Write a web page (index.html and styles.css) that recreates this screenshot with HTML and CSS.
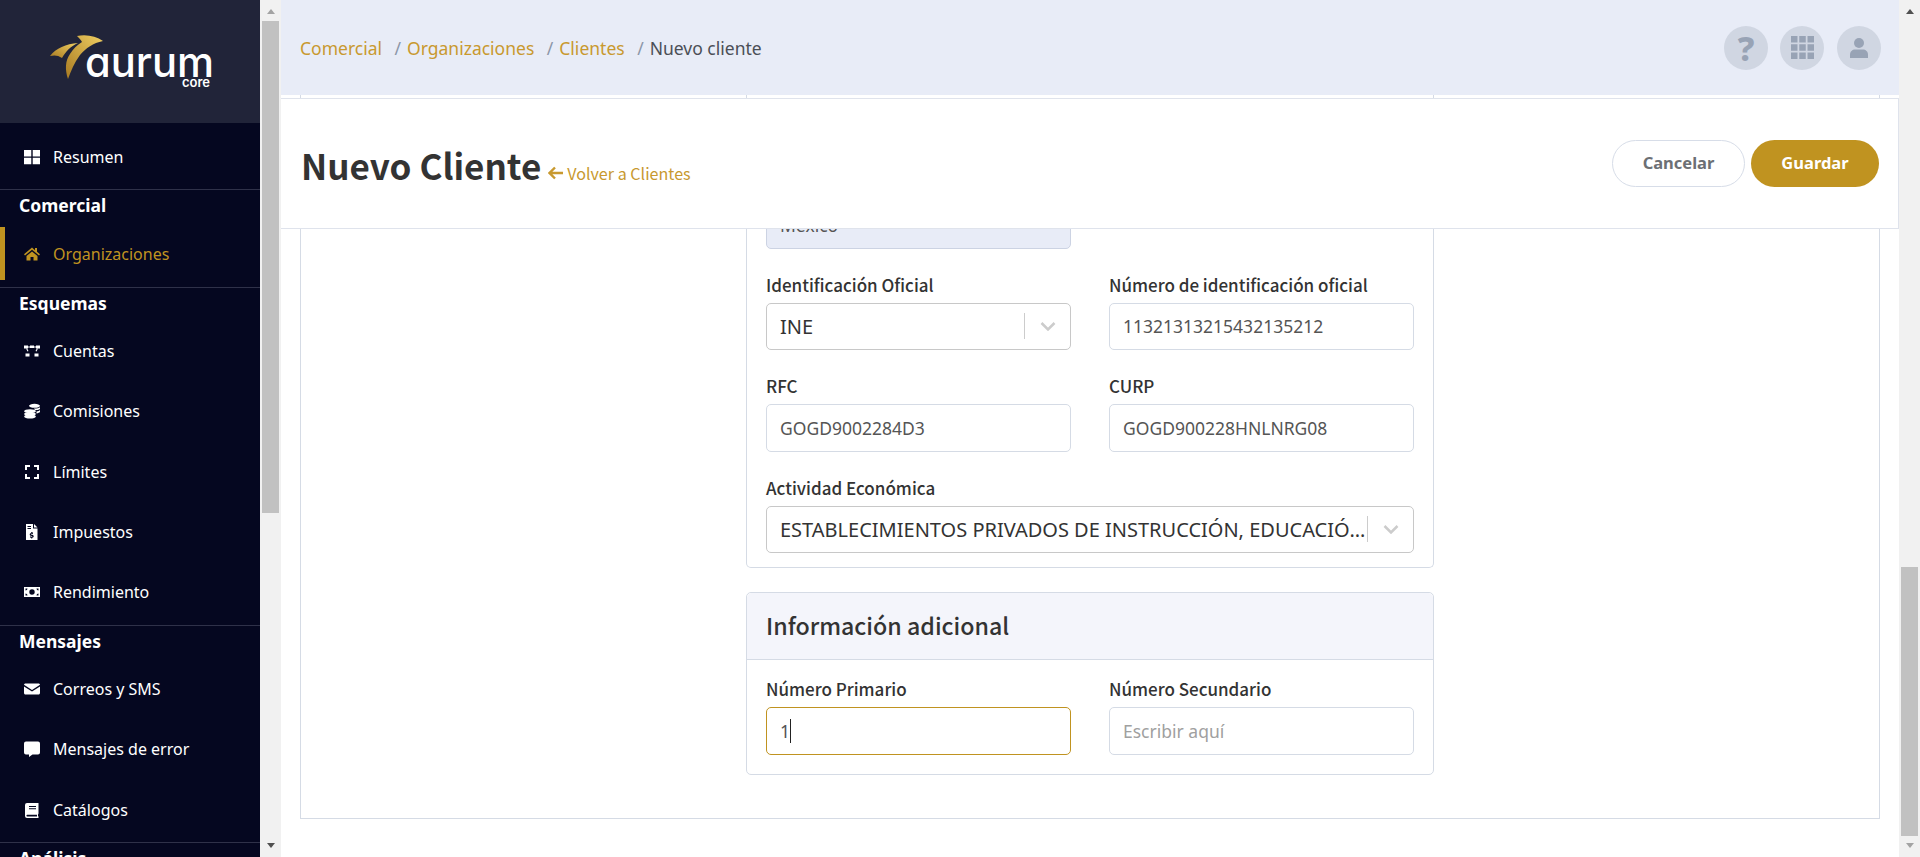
FILE: index.html
```html
<!DOCTYPE html>
<html lang="es">
<head>
<meta charset="utf-8">
<title>Nuevo Cliente</title>
<link rel="stylesheet" href="styles.css">
</head>
<body>
<div class="app">
  <aside class="sidebar">
    <div class="brand">
      <svg class="logo" viewBox="0 0 260 123" width="260" height="123">
        <defs>
          <linearGradient id="gold" x1="0" y1="1" x2="1" y2="0">
            <stop offset="0" stop-color="#a87a22"/>
            <stop offset="1" stop-color="#f0cf62"/>
          </linearGradient>
        </defs>
        <path fill="url(#gold)" d="M77 36C86 34 96 36 103 41C93 43 86 48 80 55C74 63 71 71 68 79C65 70 65 61 70 54C73 49 77 45 82 42C81 40 79 38 77 36Z"/>
        <path fill="url(#gold)" d="M50 56C56 48 66 44 78 43C71 46 66 51 62 58C58 55 54 55 50 56Z"/>
        <text class="logo-word" x="85" y="77">aurum</text>
        <text class="logo-sub" x="182" y="87">core</text>
      </svg>
    </div>
    <nav>
      <div class="group group-first">
        <a class="item"><svg class="ico" viewBox="0 0 16 16"><path d="M0 1h7.300v6.500H0zM8.700 1H16v6.500H8.700zM0 8.800h7.300v6.500H0zM8.700 8.800H16v6.500H8.700z"/></svg>Resumen</a>
      </div>
      <div class="group">
        <h3 class="group-title">Comercial</h3>
        <a class="item active"><svg class="ico" viewBox="0 0 16 16"><path d="M8 1.500 0 8.300l1 1.200L8 3.700l7 5.800 1-1.200-3-2.500V2h-2v2.300zM2.500 10v4.500h4V11h3v3.500h4V10L8 5.400z"/></svg>Organizaciones</a>
      </div>
      <div class="group group-long">
        <h3 class="group-title">Esquemas</h3>
        <a class="item"><svg class="ico" viewBox="0 0 16 16"><path d="M0 2.500h4v3H0zM6 2.500h4V5H6zM12 2.500h4v3h-4zM1.500 10.500h4v3h-4zM10.500 10.500h4v3h-4z"/><path d="M4 3.500h2v1H4zM10 3.500h2v1h-2zM2 5.500h1.200l1.300 2.500-1 .6zM14 5.500h-1.200l-1.300 2.500 1 .6z"/></svg>Cuentas</a>
        <a class="item"><svg class="ico" viewBox="0 0 16 16"><ellipse cx="6" cy="8.200" rx="5.900" ry="2"/><ellipse cx="6" cy="11" rx="5.900" ry="2"/><ellipse cx="6" cy="13.500" rx="5.900" ry="2"/><ellipse cx="10.500" cy="2.800" rx="5.500" ry="2"/><path d="M10 5.500c3 0 5-.5 6-1.300V6c-1 .8-3 1.200-5 1.200zM12.500 8.500c1.500-.2 3-.7 3.500-1.400V9c-.5.600-2 1.200-3.500 1.400z"/></svg>Comisiones</a>
        <a class="item"><svg class="ico" viewBox="0 0 16 16"><path d="M1 1h5v2H3v3H1zM10 1h5v5h-2V3h-3zM1 10h2v3h3v2H1zM13 10h2v5h-5v-2h3z"/></svg>Límites</a>
        <a class="item"><svg class="ico" viewBox="0 0 16 16"><path fill-rule="evenodd" d="M2 0h7v4.500h4.500V16H2zM3.500 2v1H7V2zM3.500 4v1H7V4zM7.200 8v.900c-1 .1-1.500.7-1.500 1.500 0 1.700 2.700 1.100 2.700 2 0 .5-1.300.4-2.300-.1v1.100c.3.200.7.300 1.100.3v.900h1v-.900c1-.2 1.500-.8 1.500-1.500 0-1.700-2.700-1.200-2.700-2 0-.5 1-.4 2-.1V8.600a3 3 0 0 0-.8-.2V8z"/><path d="M10 0l3.500 3.500H10z"/></svg>Impuestos</a>
        <a class="item"><svg class="ico" viewBox="0 0 16 16"><path fill-rule="evenodd" d="M0 3h16v10H0zM1.500 4.500v2a2 2 0 0 0 2-2zM12.500 4.500a2 2 0 0 0 2 2v-2zM8 5.300a2.700 2.700 0 1 0 0 5.400 2.700 2.700 0 0 0 0-5.400zM1.500 9.500v2h2a2 2 0 0 0-2-2zM14.500 9.500a2 2 0 0 0-2 2h2z"/></svg>Rendimiento</a>
      </div>
      <div class="group group-tight">
        <h3 class="group-title">Mensajes</h3>
        <a class="item"><svg class="ico" viewBox="0 0 16 16"><path d="M1.500 2.500h13c.8 0 1.500.6 1.500 1.300L8 9 0 3.800c0-.7.700-1.300 1.500-1.300zM0 5.500l8 5 8-5v6.500c0 .8-.7 1.500-1.500 1.500h-13C.7 13.500 0 12.800 0 12z"/></svg>Correos y SMS</a>
        <a class="item"><svg class="ico" viewBox="0 0 16 16"><path d="M2 .500h12a2 2 0 0 1 2 2v9a2 2 0 0 1-2 2H8.500L5 16v-2.500H2a2 2 0 0 1-2-2v-9a2 2 0 0 1 2-2z"/></svg>Mensajes de error</a>
        <a class="item"><svg class="ico" viewBox="0 0 16 16"><path fill-rule="evenodd" d="M3 1h11.500v10.500c0 .5-.3.800-.5 1v1.500l.5.500V16H3a2 2 0 0 1-2-2V3a2 2 0 0 1 2-2zM5 4v1h7V4zM5 6.300v1h7v-1zM3.200 12.700c-1 0-1 1.800 0 1.800H13v-1.800z"/></svg>Catálogos</a>
      </div>
      <div class="group">
        <h3 class="group-title">Análisis</h3>
      </div>
    </nav>
  </aside>
  <div class="scrollbar">
    <span class="arrow up faint"></span>
    <span class="thumb thumb-side"></span>
    <span class="track"></span>
    <span class="arrow down"></span>
  </div>

  <main class="main">
    <section class="panel">
      <div class="card card-first">
        <div class="hidden-space"></div>
        <div class="grid">
          <div class="field">
            <div class="control disabled">México</div>
          </div>
          <div></div>
          <div class="field">
            <label class="label">Identificación Oficial</label>
            <div class="control select"><span class="value">INE</span><i class="sep"></i><svg class="chev" viewBox="0 0 16 9"><path d="M1.500 1 8 7.500 14.500 1"/></svg></div>
          </div>
          <div class="field">
            <label class="label">Número de identificación oficial</label>
            <div class="control">11321313215432135212</div>
          </div>
          <div class="field">
            <label class="label">RFC</label>
            <div class="control">GOGD9002284D3</div>
          </div>
          <div class="field">
            <label class="label">CURP</label>
            <div class="control">GOGD900228HNLNRG08</div>
          </div>
          <div class="field wide">
            <label class="label">Actividad Económica</label>
            <div class="control select"><span class="value">ESTABLECIMIENTOS PRIVADOS DE INSTRUCCIÓN, EDUCACIÓN Y CULTURA</span><i class="sep"></i><svg class="chev" viewBox="0 0 16 9"><path d="M1.500 1 8 7.500 14.500 1"/></svg></div>
          </div>
        </div>
      </div>

      <div class="card">
        <h2 class="card-head">Información adicional</h2>
        <div class="grid card-body">
          <div class="field">
            <label class="label">Número Primario</label>
            <div class="control focus">1<i class="caret"></i></div>
          </div>
          <div class="field">
            <label class="label">Número Secundario</label>
            <div class="control placeholder">Escribir aquí</div>
          </div>
        </div>
      </div>
    </section>

    <header class="topbar">
      <ol class="crumbs">
        <li><a>Comercial</a></li>
        <li><span class="slash">/</span><a>Organizaciones</a></li>
        <li><span class="slash">/</span><a>Clientes</a></li>
        <li><span class="slash">/</span>Nuevo cliente</li>
      </ol>
      <div class="tools">
        <span class="tool"><span class="q">?</span></span>
        <span class="tool"><svg class="tool-grid" viewBox="0 0 23 23"><path d="M0 0h6.500v6.500H0zM8.250 0h6.500v6.500h-6.500zM16.500 0H23v6.500h-6.500zM0 8.250h6.500v6.500H0zM8.250 8.250h6.500v6.500h-6.500zM16.500 8.250H23v6.500h-6.500zM0 16.500h6.500V23H0zM8.250 16.500h6.500V23h-6.500zM16.500 16.500H23V23h-6.500z"/></svg></span>
        <span class="tool tool-last"><svg class="tool-user" viewBox="0 0 18 20"><circle cx="9" cy="5" r="5"/><path d="M0 20v-3.500C0 13.500 2.500 11.500 5 11.500h8c2.500 0 5 2 5 5V20z"/></svg></span>
      </div>
    </header>

    <div class="titlebar">
      <div class="title-wrap">
        <h1 class="title">Nuevo Cliente</h1>
        <a class="back"><svg class="back-ico" viewBox="0 0 15 14"><path d="M7 1.500 1.500 7 7 12.500M2 7h13"/></svg>Volver a Clientes</a>
      </div>
      <div class="actions">
        <button class="btn btn-ghost">Cancelar</button>
        <button class="btn btn-gold">Guardar</button>
      </div>
    </div>
  </main>

  <div class="scrollbar">
    <span class="arrow up"></span>
    <span class="thumb thumb-main"></span>
    <span class="track"></span>
    <span class="arrow down faint"></span>
  </div>
</div>
</body>
</html>
```
FILE: styles.css
```css
* { box-sizing: border-box; }
html, body { margin: 0; height: 100%; overflow: hidden; }
body { font-family: "Noto Sans", sans-serif; background: #fff; color: #333; }
.app { display: flex; height: 857px; overflow: hidden; }

/* sidebar */
.sidebar { width: 260px; flex: none; background: #050720; color: #fff; overflow: hidden; }
.brand { height: 123px; background: #212439; }
.logo { display: block; }
.logo-word { font-family: Inter, sans-serif; font-size: 41.700px; font-weight: 500; fill: #fff; font-feature-settings: "cv11" 1; }
.logo-sub { font-family: Inter, sans-serif; font-size: 13px; font-weight: 600; fill: #fff; }
.group { border-bottom: 1px solid #2f3149; padding-bottom: 7px; display: flex; flex-direction: column; gap: 7.250px; }
.group-first { padding-top: 8px; padding-bottom: 5px; }
.group-long { padding-bottom: 6px; }
.group-tight { padding-bottom: 5.500px; }
.group-title { margin: 0 0 -3.250px; height: 33px; line-height: 31px; padding-left: 19px; font-size: 17.500px; font-weight: 700; color: #fff; }
.item { display: flex; align-items: center; height: 53px; padding: 0 0 1px 24px; font-size: 16px; gap: 13px; color: #fff; }
.item.active { color: #c09320; border-left: 5px solid #c09320; padding: 0 0 0 19px; }
.ico { width: 16px; height: 16px; fill: currentColor; flex: none; }

/* scrollbars */
.scrollbar { width: 21px; flex: none; background: #f1f1f1; display: flex; flex-direction: column; align-items: center; }
.arrow { flex: none; width: 0; height: 0; border-left: 4.500px solid transparent; border-right: 4.500px solid transparent; }
.arrow.up { border-bottom: 5px solid #505050; margin-top: 9px; }
.arrow.down { border-top: 5px solid #505050; margin-bottom: 9px; }
.arrow.faint.up { border-bottom-color: #a3a3a3; }
.arrow.faint.down { border-top-color: #a3a3a3; }
.thumb { width: 17px; background: #c1c1c1; flex: none; }
.thumb-side { margin-top: 7px; height: 492px; }
.thumb-main { margin-top: 553px; height: 269px; }
.track { flex: 1; }

/* main */
.main { flex: 1; min-width: 0; position: relative; overflow: hidden; display: flex; flex-direction: column; justify-content: flex-end; }
.panel { margin: 0 19px 38px; border: 1px solid #d5dbe5; border-top: 0; padding: 0 445px 43.500px; display: flex; flex-direction: column; gap: 24px; flex: none; }
.card { border: 1px solid #d5dbe5; border-radius: 5px; flex: none; }
.card-first { border-top: 0; padding: 0 19px 14px; }
.hidden-space { height: 220px; }
.grid { display: grid; grid-template-columns: 305px 305px; column-gap: 38px; row-gap: 26px; }
.wide { grid-column: 1 / -1; }
.card-head { margin: 0; height: 67px; line-height: 65px; padding-left: 19px; background: #f4f5fb; border-bottom: 1px solid #d5dbe5; border-radius: 5px 5px 0 0; font-family: "Noto Sans CJK JP", sans-serif; font-size: 23.200px; font-weight: 500; color: #333; }
.card-body { padding: 19px 19px 19px; }
.label { display: block; height: 22px; line-height: 20px; margin-bottom: 6px; font-family: "Noto Sans CJK JP", sans-serif; font-size: 17px; font-weight: 500; color: #333; }
.control { display: flex; align-items: center; height: 47.500px; border: 1px solid #d5dbe5; border-radius: 5px; padding: 0 13px; font-size: 17.500px; color: #555; background: #fff; }
.disabled { background: #e8ecf7; border-color: #ccd3e3; }
.placeholder { color: #a0a0a0; }
.focus { border-color: #c09320; }
.caret { display: inline-block; width: 1px; height: 24px; background: #222; }
.select { border-color: #c8c8c8; padding-right: 0; font-size: 20px; color: #333; }
.select .value { flex: 1; min-width: 0; white-space: nowrap; overflow: hidden; text-overflow: ellipsis; }
.sep { flex: none; width: 1px; height: 26px; background: #ccc; }
.chev { flex: none; width: 16px; height: 9px; margin: 0 14px 0 15px; fill: none; stroke: #ccc; stroke-width: 2.500; }

/* top bar */
.topbar { position: absolute; left: 0; right: 0; top: 0; height: 95px; background: #e8ecf7; display: flex; align-items: center; justify-content: space-between; padding: 0 18px 0 19px; }
.crumbs { list-style: none; margin: 0; padding: 0; display: flex; font-size: 17.500px; gap: 12.500px; color: #4b4f56; }
.crumbs a { color: #c8992f; }
.slash { color: #8c96a8; margin-right: 6px; }
.tools { display: flex; gap: 12px; }
.tool { width: 44px; height: 44px; border-radius: 50%; background: #d0d6e2; display: flex; align-items: center; justify-content: center; }
.tool-last { margin-left: 1px; }
.tool-grid { width: 23px; height: 23px; fill: #98a3b5; }
.tool-user { width: 18px; height: 20px; fill: #98a3b5; }
.q { font-size: 34px; font-weight: 800; line-height: 1; color: #98a3b5; }

/* title bar */
.titlebar { position: absolute; left: 0; right: 0; top: 98px; height: 131px; background: #fff; border-top: 1px solid #dfe3ec; border-bottom: 1px solid #dfe3ec; border-right: 1px solid #dfe3ec; display: flex; align-items: center; justify-content: space-between; padding: 0 19px 0 20px; }
.title-wrap { display: flex; align-items: baseline; gap: 7px; padding-top: 2px; }
.title { margin: 0; font-family: "Noto Sans CJK JP", sans-serif; font-size: 35px; font-weight: 600; color: #333; line-height: 1.2; }
.back { display: flex; align-items: center; gap: 4px; font-family: "Noto Sans CJK JP", sans-serif; font-size: 16.100px; color: #c8992f; }
.back-ico { width: 15px; height: 14px; fill: none; stroke: #c8992f; stroke-width: 2.400; }
.actions { display: flex; gap: 6px; }
.btn { height: 47px; border-radius: 24px; font-family: "Noto Sans", sans-serif; font-size: 16.500px; font-weight: 700; cursor: pointer; padding: 0 0 2px; }
.btn-ghost { width: 133px; background: #fff; border: 1px solid #d7dde8; color: #6c6f74; }
.btn-gold { width: 128px; background: #c09320; border: 0; color: #fff; }
```
